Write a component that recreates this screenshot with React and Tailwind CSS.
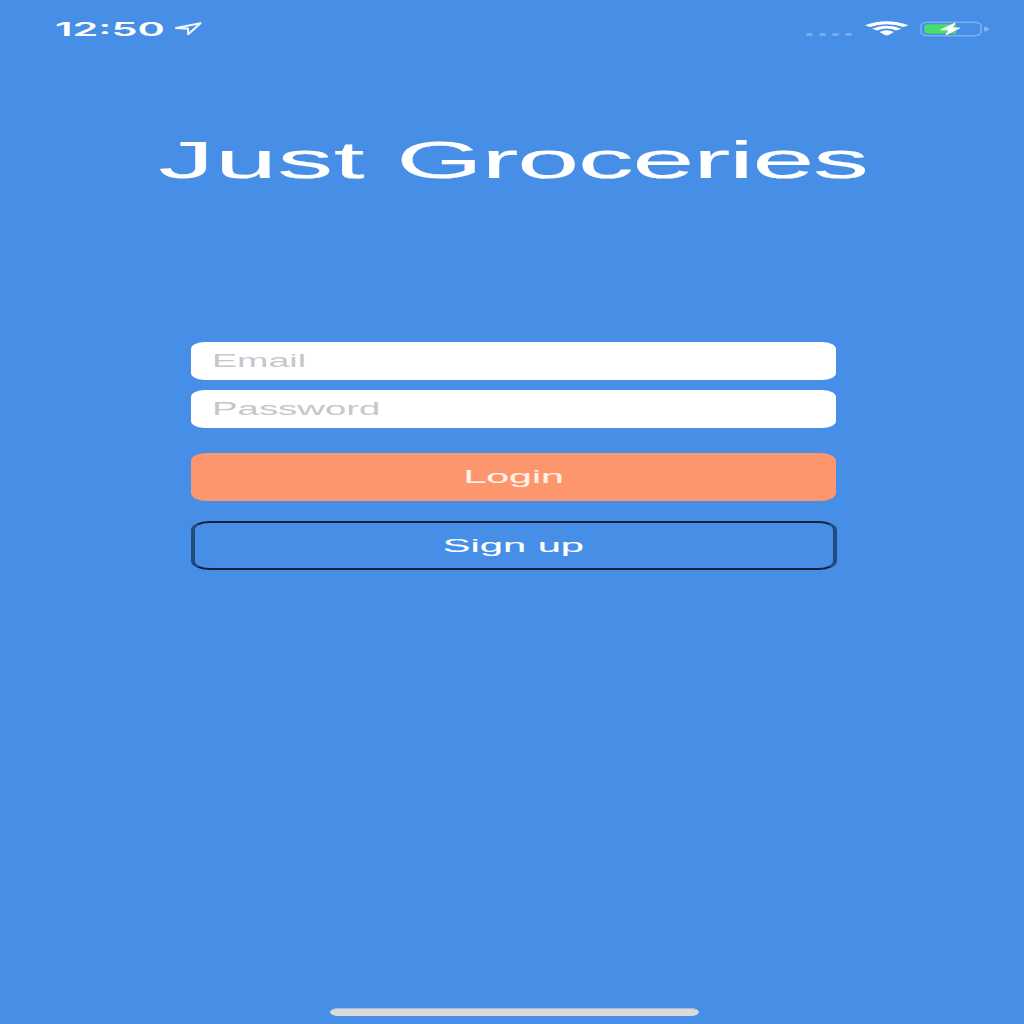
function LocationIcon() {
  return (
    <svg className="h-[18px] w-[32px]" viewBox="0 0 32 18" fill="none">
      <path
        d="M3 8 L27.5 3.2 L15.2 14.2 L15 8.6 Z"
        stroke="#f1f7ff"
        strokeWidth="2.1"
        strokeLinejoin="round"
      />
    </svg>
  );
}

function WifiIcon() {
  return (
    <svg className="h-[15px] w-[44px]" viewBox="0 0 44 15" fill="none">
      <path d="M0 4.3 Q21.5 -4 43.5 4.3 L38.5 6 Q21.5 0.4 5 6 Z" fill="white" />
      <path d="M7 7.7 Q21.5 1.6 36.5 7.7 L31 9.4 Q21.5 5.8 12.4 9.4 Z" fill="white" />
      <path d="M14.5 10.9 Q21.5 7.5 29 10.9 L24 13.7 Q21.7 14.8 19.5 13.7 Z" fill="white" />
    </svg>
  );
}

function BatteryIcon() {
  return (
    <svg className="h-[18px] w-[72px]" viewBox="0 0 72 18" fill="none">
      <rect x="2" y="2.2" width="60" height="13.6" rx="7" ry="3.5" stroke="#7dafef" strokeWidth="1.6" />
      <path d="M65 6.5 Q70 7.5 70 9 Q70 10.5 65 11.5 Z" fill="#83b1ee" />
      <path d="M10 4.2 H37 V13.8 H10 Q5.5 13.8 5.5 11.6 V6.4 Q5.5 4.2 10 4.2 Z" fill="#4bdc69" />
      <path
        d="M36 3.2 L22 9.8 H30 L27 14.8 L40.5 8 H33 Z"
        fill="white"
        stroke="white"
        strokeWidth="1"
        strokeLinejoin="round"
      />
    </svg>
  );
}

function Dots() {
  return (
    <div className="flex gap-[6px]">
      {[0, 1, 2, 3].map((n) => (
        <span key={n} className="h-[3px] w-[7px] rounded-full bg-[#78abed]" />
      ))}
    </div>
  );
}

function Field({ label, stretch }) {
  return (
    <div className="flex h-[38px] items-center rounded-[14px/7px] bg-white pt-[2px] pl-[20.5px]">
      <span className={`block origin-left text-[17.5px] leading-none text-[#c6c6cb] ${stretch}`}>{label}</span>
    </div>
  );
}

export default function App() {
  return (
    <main className="flex h-[1024px] w-[1024px] flex-col overflow-hidden bg-[#478ee6] font-['Liberation_Sans',Arial,sans-serif] text-white">
      <header className="flex h-[60px] items-start justify-between pr-[33px] pl-[55px]">
        <div className="flex pt-[20px]">
          <span className="block w-[118px] origin-left scale-x-[2.18] font-['Inter',sans-serif] text-[19px] leading-[19px] font-semibold whitespace-nowrap">
            12:50
          </span>
          <LocationIcon />
        </div>
        <div className="flex pt-[20px]">
          <div className="pt-[13px] pr-[13px]">
            <Dots />
          </div>
          <div className="mt-[1px] mr-[10px]">
            <WifiIcon />
          </div>
          <BatteryIcon />
        </div>
      </header>

      <h1 className="mt-[74px] flex h-[60px] justify-center pl-[3px] text-[51.5px] leading-[52px] font-normal [-webkit-text-stroke:0.2px_white]">
        <span className="block scale-x-[2.16] whitespace-nowrap">
          <span className="tracking-[0.3px]">Just</span> <span className="tracking-[-0.55px]">Groceries</span>
        </span>
      </h1>

      <form className="mt-[148px] ml-[191px] flex w-[645px] flex-col">
        <Field label="Email" stretch="scale-x-[2.15]" />
        <div className="mt-[10px]">
          <Field label="Password" stretch="scale-x-[2.19]" />
        </div>
        <button type="button" className="mt-[25px] flex h-[48px] items-center justify-center rounded-[16px/8px] bg-[#fd966d] pt-[1px] pl-[1px]">
          <span className="block scale-x-[2.22] text-[18.5px] leading-none text-[#fff1ea] [-webkit-text-stroke:0.1px_#fff1ea]">Login</span>
        </button>
        <button type="button" className="-mr-[1px] mt-[20px] flex h-[49px] items-center justify-center rounded-[18px/9px] border-x-[4px] border-y-2 border-x-[#234b7d] border-y-[#10243f] pt-[1px] pr-[1px]">
          <span className="block scale-x-[2.25] text-[18.5px] leading-none [-webkit-text-stroke:0.1px_white]">Sign up</span>
        </button>
      </form>

      <div className="mt-auto mb-[8px] ml-[330px] h-[8px] w-[369px] rounded-[8px/4px] border-t border-[#9dbde4] bg-[#dcdbda]" />
    </main>
  );
}
